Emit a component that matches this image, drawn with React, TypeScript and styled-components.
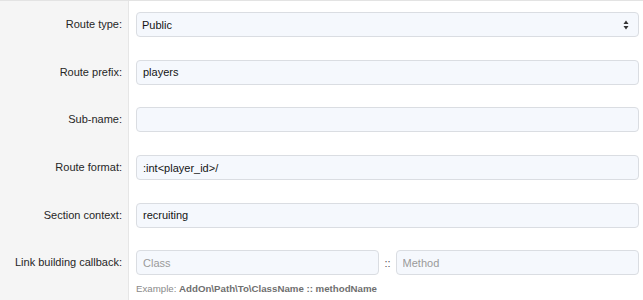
import styled, { createGlobalStyle } from "styled-components";

const GlobalStyle = createGlobalStyle`
  html, body {
    margin: 0;
    padding: 0;
    background: #fff;
  }
  body {
    font-family: "Liberation Sans", Arial, sans-serif;
    font-size: 11px;
    color: #141414;
  }
`;

const Form = styled.div`
  width: 643px;
  height: 300px;
  overflow: hidden;
  display: flex;
  flex-direction: column;
  background: linear-gradient(to right, #f5f5f5 128px, #e6e6e6 128px, #e6e6e6 129px, #fff 129px);
`;

const Row = styled.div<{ $first?: boolean }>`
  display: grid;
  grid-template-columns: 129px 1fr;
  align-items: start;
  padding: 11.3px 0;
  border-top: ${(p) => (p.$first ? "1px solid #e3e3e3" : "none")};
`;

const Label = styled.div`
  height: 25px;
  line-height: 25px;
  text-align: right;
  padding-right: 7px;
  color: #262626;
  white-space: nowrap;
`;

const Field = styled.div`
  padding: 0 4px 0 7px;
  display: flex;
  flex-direction: column;
`;

const Input = styled.input`
  box-sizing: border-box;
  width: 100%;
  min-width: 0;
  height: 25px;
  margin: 0;
  padding: 0 6px;
  background: #f5f8fd;
  border: 1px solid #dadde2;
  border-radius: 4px;
  font: inherit;
  color: #141414;
  outline: none;

  &::placeholder {
    color: #9a9a9a;
  }
`;

const SelectWrap = styled.div`
  position: relative;
`;

const Select = styled.select`
  box-sizing: border-box;
  width: 100%;
  height: 25px;
  margin: 0;
  padding: 0 20px 0 5px;
  background: #f5f8fd;
  border: 1px solid #dadde2;
  border-radius: 4px;
  font: inherit;
  color: #141414;
  appearance: none;
  -webkit-appearance: none;
  outline: none;
`;

const Arrows = styled.svg`
  position: absolute;
  right: 10px;
  top: 8px;
  pointer-events: none;
`;

const Pair = styled.div`
  display: flex;
  align-items: center;
  gap: 5px;
`;

const Sep = styled.span`
  color: #555;
  font-size: 11px;
`;

const Hint = styled.div`
  margin-top: 8px;
  font-size: 9.7px;
  color: #8a8a8a;

  b {
    color: #6f6f6f;
  }
`;

export default function App() {
  return (
    <>
      <GlobalStyle />
      <Form>
        <Row $first>
          <Label>Route type:</Label>
          <Field>
            <SelectWrap>
              <Select defaultValue="public">
                <option value="public">Public</option>
                <option value="admin">Admin</option>
                <option value="api">API</option>
              </Select>
              <Arrows width="6" height="10" viewBox="0 0 6 10">
                <path d="M3 0.5 L5.5 4 L0.5 4 Z" fill="#333" />
                <path d="M0.5 6 L5.5 6 L3 9.5 Z" fill="#333" />
              </Arrows>
            </SelectWrap>
          </Field>
        </Row>
        <Row>
          <Label>Route prefix:</Label>
          <Field>
            <Input defaultValue="players" />
          </Field>
        </Row>
        <Row>
          <Label>Sub-name:</Label>
          <Field>
            <Input defaultValue="" />
          </Field>
        </Row>
        <Row>
          <Label>Route format:</Label>
          <Field>
            <Input defaultValue=":int<player_id>/" />
          </Field>
        </Row>
        <Row>
          <Label>Section context:</Label>
          <Field>
            <Input defaultValue="recruiting" />
          </Field>
        </Row>
        <Row>
          <Label>Link building callback:</Label>
          <Field>
            <Pair>
              <Input placeholder="Class" />
              <Sep>::</Sep>
              <Input placeholder="Method" />
            </Pair>
            <Hint>
              Example: <b>AddOn\Path\To\ClassName :: methodName</b>
            </Hint>
          </Field>
        </Row>
      </Form>
    </>
  );
}
